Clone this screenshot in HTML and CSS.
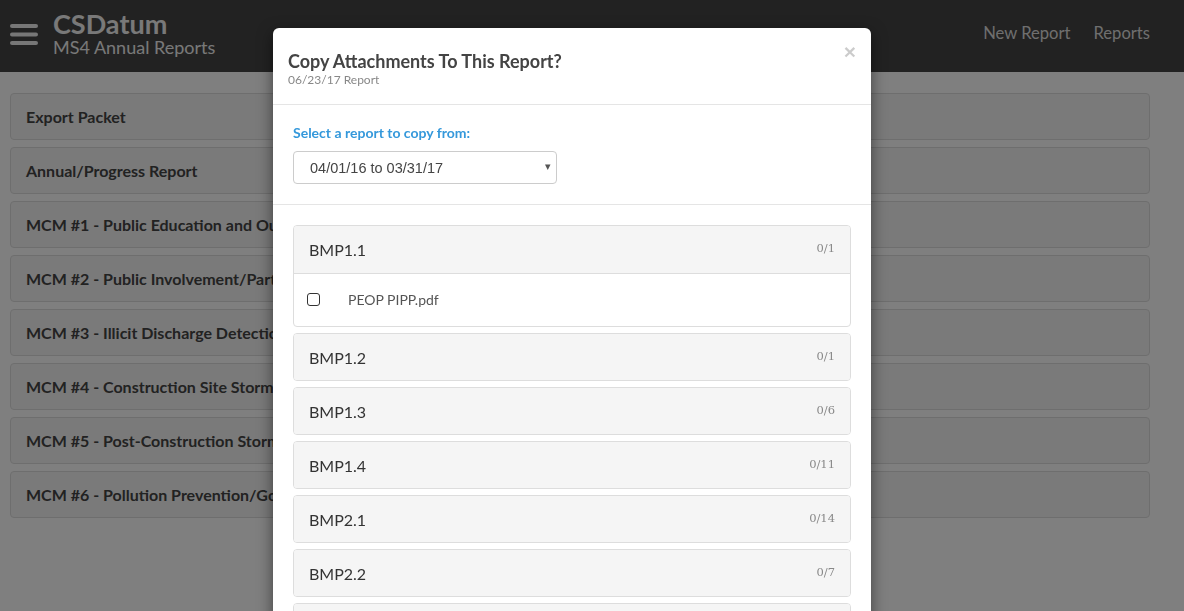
FILE: index.html
```html
<!DOCTYPE html>
<html>
<head>
<meta charset="utf-8">
<link rel="stylesheet" href="styles.css">
</head>
<body>
<header class="navbar">
  <div class="brand">
    <svg class="burger" width="28" height="22" viewBox="0 0 28 22"><rect x="0" y="0" width="28" height="4" rx="2"/><rect x="0" y="8.5" width="28" height="4" rx="2"/><rect x="0" y="17" width="28" height="4" rx="2"/></svg>
    <div class="brand-text">
      <div class="brand-name">CSDatum</div>
      <div class="brand-sub">MS4 Annual Reports</div>
    </div>
  </div>
  <nav class="nav-links">
    <a>New Report</a>
    <a>Reports</a>
  </nav>
</header>
<main class="page">
  <div class="page-panel">Export Packet</div>
  <div class="page-panel">Annual/Progress Report</div>
  <div class="page-panel">MCM #1 - Public Education and Outreach</div>
  <div class="page-panel">MCM #2 - Public Involvement/Participation</div>
  <div class="page-panel">MCM #3 - Illicit Discharge Detection and Elimination</div>
  <div class="page-panel">MCM #4 - Construction Site Stormwater Runoff Control</div>
  <div class="page-panel">MCM #5 - Post-Construction Stormwater Management</div>
  <div class="page-panel">MCM #6 - Pollution Prevention/Good Housekeeping</div>
</main>
<div class="backdrop"></div>
<div class="modal">
  <div class="modal-header">
    <span class="close">&times;</span>
    <div class="modal-title">Copy Attachments To This Report?</div>
    <div class="modal-sub">06/23/17 Report</div>
  </div>
  <div class="modal-section">
    <div class="label">Select a report to copy from:</div>
    <div class="select"><span>04/01/16 to 03/31/17</span><span class="caret">&#9662;</span></div>
  </div>
  <div class="modal-section list">
    <div class="acc">
      <div class="acc-head open"><span class="acc-title">BMP1.1</span><span class="count">0/1</span></div>
      <div class="acc-body"><span class="check"></span><span class="file">PEOP PIPP.pdf</span></div>
    </div>
    <div class="acc"><div class="acc-head"><span class="acc-title">BMP1.2</span><span class="count">0/1</span></div></div>
    <div class="acc"><div class="acc-head"><span class="acc-title">BMP1.3</span><span class="count">0/6</span></div></div>
    <div class="acc"><div class="acc-head"><span class="acc-title">BMP1.4</span><span class="count">0/11</span></div></div>
    <div class="acc"><div class="acc-head"><span class="acc-title">BMP2.1</span><span class="count">0/14</span></div></div>
    <div class="acc"><div class="acc-head"><span class="acc-title">BMP2.2</span><span class="count">0/7</span></div></div>
    <div class="acc"><div class="acc-head"><span class="acc-title">BMP2.3</span><span class="count">0/3</span></div></div>
  </div>
</div>
</body>
</html>
```
FILE: styles.css
```css
html, body {
  margin: 0;
  height: 100%;
  overflow: hidden;
}
body {
  font-family: Lato, "Noto Sans", sans-serif;
  background: #fff;
  color: #444;
}
.navbar {
  height: 72px;
  background: #444;
  display: flex;
  align-items: center;
  justify-content: space-between;
  padding: 0 34px 0 10px;
}
.brand {
  display: flex;
  align-items: center;
  gap: 15px;
}
.burger {
  fill: #eee;
  margin-top: -2px;
}
.brand-text {
  color: #f2f2f2;
  margin-top: -5px;
}
.brand-name {
  font-size: 27px;
  font-weight: 700;
  line-height: 27px;
}
.brand-sub {
  font-size: 18px;
  line-height: 20px;
}
.nav-links {
  display: flex;
  gap: 23px;
}
.nav-links a {
  color: #dedede;
  font-size: 16.6px;
  margin-top: -7px;
}
.page {
  padding: 21px 34px 0 10px;
}
.page-panel {
  height: 45px;
  border: 1px solid #ddd;
  border-radius: 4px;
  background: #f5f5f5;
  margin-bottom: 7px;
  display: flex;
  align-items: center;
  padding-left: 15px;
  font-size: 16px;
  font-weight: 700;
  color: #444;
  white-space: nowrap;
  overflow: hidden;
}
.backdrop {
  position: fixed;
  inset: 0;
  background: rgba(0, 0, 0, 0.5);
}
.modal {
  position: absolute;
  left: 273px;
  top: 28px;
  width: 598px;
  background: #fff;
  border-radius: 6px;
  box-shadow: 0 5px 15px rgba(0, 0, 0, 0.5);
}
.modal-header {
  position: relative;
  padding: 23px 15px 17px;
  border-bottom: 1px solid #e5e5e5;
}
.close {
  position: absolute;
  top: 12px;
  right: 15px;
  font-size: 21px;
  font-weight: 700;
  color: #000;
  opacity: 0.2;
  font-family: "Liberation Sans", sans-serif;
}
.modal-title {
  font-size: 18px;
  font-weight: 700;
  line-height: 21px;
  color: #444;
}
.modal-sub {
  margin-top: 1px;
  font-size: 12px;
  line-height: 14px;
  color: #888;
}
.modal-section {
  padding: 20px;
  border-bottom: 1px solid #e5e5e5;
}
.label {
  font-size: 14px;
  font-weight: 700;
  line-height: 16px;
  color: #3498db;
}
.select {
  margin-top: 10px;
  height: 31px;
  border: 1px solid #ccc;
  border-radius: 4px;
  display: flex;
  align-items: center;
  justify-content: space-between;
  padding: 0 5px 0 16px;
  box-sizing: content-box;
  width: 241px;
  font-family: "Liberation Sans", sans-serif;
  font-size: 14.5px;
  color: #444;
}
.caret {
  font-size: 11px;
  color: #555;
  margin-top: -2px;
}
.list {
  border-bottom: none;
}
.acc {
  border: 1px solid #ddd;
  border-radius: 4px;
  margin-bottom: 6px;
  overflow: hidden;
}
.acc-head {
  height: 46px;
  background: #f5f5f5;
  display: flex;
  justify-content: space-between;
  padding: 0 15px;
}
.acc-head.open {
  border-bottom: 1px solid #ddd;
  height: 47px;
}
.acc-title {
  font-size: 16px;
  color: #333;
  line-height: 46px;
  padding-top: 1px;
}
.count {
  font-family: "DejaVu Serif", "Liberation Serif", serif;
  font-size: 11.5px;
  color: #888;
  padding-top: 15px;
}
.acc-body {
  height: 52px;
  display: flex;
  align-items: center;
  padding-left: 13px;
}
.check {
  width: 11px;
  height: 11px;
  border: 1.5px solid #333;
  border-radius: 3px;
  margin-top: -2px;
}
.file {
  margin-left: 28px;
  margin-top: -2px;
  font-family: Lato, sans-serif;
  font-size: 14px;
  color: #555;
}
```
